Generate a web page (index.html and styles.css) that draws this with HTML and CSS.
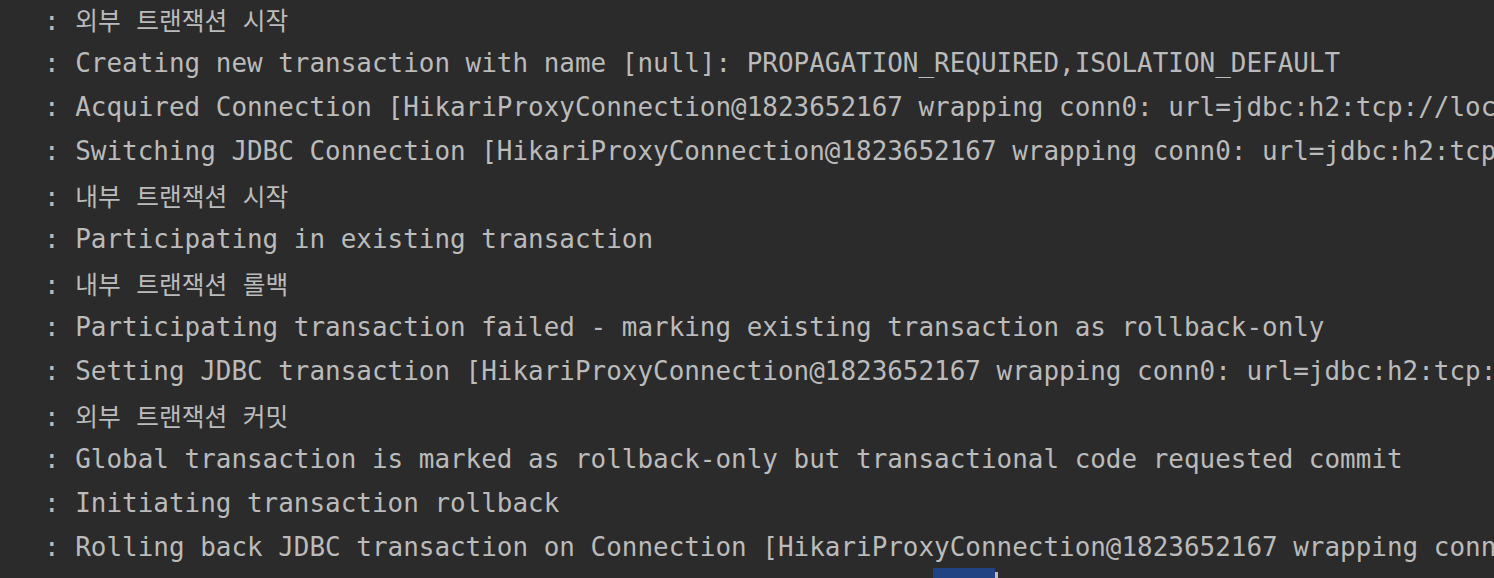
FILE: index.html
```html
<!DOCTYPE html>
<html lang="ko">
<head>
<meta charset="utf-8">
<link rel="stylesheet" href="styles.css">
</head>
<body>
<div class="console">
<div class="line">: <span class="ko">외부</span> <span class="ko">트랜잭션</span> <span class="ko">시작</span></div>
<div class="line">: Creating new transaction with name [null]: PROPAGATION_REQUIRED,ISOLATION_DEFAULT</div>
<div class="line">: Acquired Connection [HikariProxyConnection@1823652167 wrapping conn0: url=jdbc:h2:tcp://localhost/~/test user=SA] for JDBC transaction</div>
<div class="line">: Switching JDBC Connection [HikariProxyConnection@1823652167 wrapping conn0: url=jdbc:h2:tcp://localhost/~/test user=SA] to manual commit</div>
<div class="line">: <span class="ko">내부</span> <span class="ko">트랜잭션</span> <span class="ko">시작</span></div>
<div class="line">: Participating in existing transaction</div>
<div class="line">: <span class="ko">내부</span> <span class="ko">트랜잭션</span> <span class="ko">롤백</span></div>
<div class="line">: Participating transaction failed - marking existing transaction as rollback-only</div>
<div class="line">: Setting JDBC transaction [HikariProxyConnection@1823652167 wrapping conn0: url=jdbc:h2:tcp://localhost/~/test user=SA] rollback-only</div>
<div class="line">: <span class="ko">외부</span> <span class="ko">트랜잭션</span> <span class="ko">커밋</span></div>
<div class="line">: Global transaction is marked as rollback-only but transactional code requested commit</div>
<div class="line">: Initiating transaction rollback</div>
<div class="line">: Rolling back JDBC transaction on Connection [HikariProxyConnection@1823652167 wrapping conn0: url=jdbc:h2:tcp://localhost/~/test user=SA]</div>
</div>
<div class="selection"></div>
<div class="caret"></div>
</body>
</html>
```
FILE: styles.css
```css
html, body {
  margin: 0;
  padding: 0;
  background: #2b2b2b;
  width: 1494px;
  height: 578px;
  overflow: hidden;
}
body {
  position: relative;
}
.console {
  margin-top: -3px;
  padding-left: 44px;
  font-family: "DejaVu Sans Mono", "Liberation Mono", monospace;
  font-size: 25.95px;
  line-height: 44px;
  color: #bbbbbb;
}
.line {
  height: 44px;
  white-space: pre;
  overflow: hidden;
}
.ko {
  font-family: "Noto Sans CJK KR", sans-serif;
  font-size: 24.7px;
}
.selection {
  position: absolute;
  left: 933px;
  top: 568px;
  width: 62px;
  height: 10px;
  background: #214283;
}
.caret {
  position: absolute;
  left: 995px;
  top: 572px;
  width: 3px;
  height: 6px;
  background: #bbbbbb;
}
```
